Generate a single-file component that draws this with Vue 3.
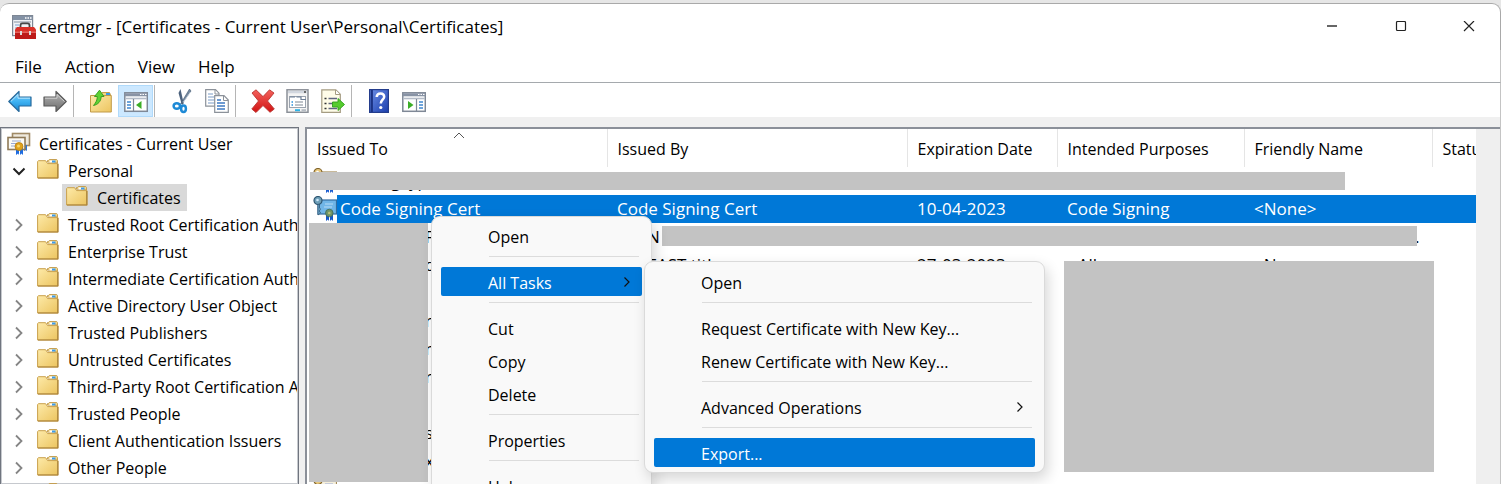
<script setup>
const stores = [
  'Trusted Root Certification Authorities',
  'Enterprise Trust',
  'Intermediate Certification Authorities',
  'Active Directory User Object',
  'Trusted Publishers',
  'Untrusted Certificates',
  'Third-Party Root Certification Authorities',
  'Trusted People',
  'Client Authentication Issuers',
  'Other People',
  'Smart Card Trusted Roots',
]
const tree = [
  { label: 'Certificates - Current User', icon: 'cert', level: 0 },
  { label: 'Personal', icon: 'folder', level: 1, arrow: 'open' },
  { label: 'Certificates', icon: 'folder', level: 2, selected: true },
  ...stores.map((label) => ({ label, icon: 'folder', level: 1, arrow: 'closed' })),
]
const columns = ['Issued To', 'Issued By', 'Expiration Date', 'Intended Purposes', 'Friendly Name', 'Status']
const rows = [
  { icon: true, tail: 'mid', cells: ['g  yp', '', '', '', ''] },
  { icon: true, selected: true, cells: ['Code Signing Cert', 'Code Signing Cert', '10-04-2023', 'Code Signing', '<None>'] },
  { tail: 'end', cells: ['F', 'MS-N', '', '', ''], dot: true },
  { tail: 'end', cells: ['d', 'FABEAST title', '27-03-2023', '<All>', '<None>'] },
  { cells: [] },
  { tail: 'end', cells: ['r', '', '', '', ''] },
  { tail: 'end', cells: ['n', '', '', '', ''] },
  { tail: 'end', cells: ['r', '', '', '', ''] },
  { cells: [] },
  { tail: 'end', cells: ['s', '', '', '', ''] },
  { tail: 'end', cells: ['x', '', '', '', ''] },
  { icon: true, cells: [] },
]
const mainMenu = [
  { label: 'Open' },
  { sep: true },
  { label: 'All Tasks', active: true, sub: true },
  { sep: true },
  { label: 'Cut' },
  { label: 'Copy' },
  { label: 'Delete' },
  { sep: true },
  { label: 'Properties' },
  { sep: true },
  { label: 'Help' },
]
const subMenu = [
  { label: 'Open' },
  { sep: true },
  { label: 'Request Certificate with New Key...' },
  { label: 'Renew Certificate with New Key...' },
  { sep: true },
  { label: 'Advanced Operations', sub: true },
  { sep: true },
  { label: 'Export...', active: true },
]
</script>

<template>
  <div class="window">
    <svg class="defs" width="0" height="0" aria-hidden="true">
      <defs>
        <linearGradient id="gBlue" x1="0" y1="0" x2="0" y2="1"><stop offset="0" stop-color="#7fd0fb" /><stop offset=".5" stop-color="#3fb2f2" /><stop offset="1" stop-color="#1583cf" /></linearGradient>
        <linearGradient id="gGrey" x1="0" y1="0" x2="0" y2="1"><stop offset="0" stop-color="#b5b5b5" /><stop offset="1" stop-color="#6c6c6c" /></linearGradient>
        <linearGradient id="gFold" x1="0" y1="0" x2="1" y2="1"><stop offset="0" stop-color="#fdeaa9" /><stop offset="1" stop-color="#ecc45f" /></linearGradient>
        <linearGradient id="gRed" x1="0" y1="0" x2="0" y2="1"><stop offset="0" stop-color="#f4625c" /><stop offset="1" stop-color="#d01212" /></linearGradient>
        <linearGradient id="gHelp" x1="0" y1="0" x2="1" y2="1"><stop offset="0" stop-color="#6d90e6" /><stop offset="1" stop-color="#1c3fae" /></linearGradient>
      </defs>
      <symbol id="folder" viewBox="0 0 22 20">
        <path d="M10.500 3V1.500h1l.8-1h7.400l.8 1V4z" fill="#f3d689" stroke="#c19a4a" stroke-width=".9" />
        <rect x="12.500" y="1.500" width="5" height="2" fill="#fff" /><rect x="15" y="1.500" width="3.500" height="2" fill="#3d9be9" />
        <path d="M.6 2.600l.8-.9h7.200l2 2.900H21V19H.6z" fill="url(#gFold)" stroke="#c9a04c" />
        <path d="M20.800 5v14H1" fill="none" stroke="#a98238" stroke-width="1.200" />
      </symbol>
      <symbol id="cert" viewBox="0 0 24 24">
        <rect x="5.500" y="1.500" width="17" height="12" fill="#eee9dd" stroke="#a08a66" stroke-width="1.600" />
        <path d="M20 13v6l-1.500-1-1.500 1v-6z" fill="#2c77d8" />
        <rect x="1" y="5.500" width="17" height="12" fill="#fbfaf5" stroke="#8f7a58" stroke-width="1.600" />
        <path d="M5 9h9M4 11.500h7M4 14h4" stroke="#98a9d6" stroke-width="1.100" />
        <path d="M9 15v8l2-1.500L12 23v-6zM13 16v7l1.500-1.500L16 23v-8z" fill="#1f6ce0" />
        <circle cx="12" cy="14.500" r="4" fill="#e0a21b" stroke="#b67d10" stroke-width=".8" /><circle cx="11.500" cy="14" r="1.500" fill="#f8d66a" />
      </symbol>
      <symbol id="keycert" viewBox="0 0 24 26">
        <rect x="5" y="4" width="18.500" height="14" fill="#f5efdc" stroke="#a58b59" stroke-width="1.200" />
        <path d="M12 8h8M11 11h8" stroke="#98a9d6" />
        <circle cx="5" cy="4.500" r="4" fill="#e7c77c" stroke="#80642c" stroke-width="1.200" /><circle cx="4.500" cy="4" r="1.300" fill="#fff" />
        <path d="M5 8.500V19l2.500-2-1.200-2 1.200-2-1-1V8z" fill="#e7c77c" stroke="#80642c" stroke-width=".8" />
        <path d="M13 18v7l1.800-1.500L16 25v-6zM17 18v7l1.500-1.500L20 25v-7z" fill="#1f5fd0" />
        <circle cx="16.300" cy="17" r="3.800" fill="#e0b040" stroke="#94731e" stroke-width=".8" />
      </symbol>
      <symbol id="keycert-on" viewBox="0 0 24 26">
        <rect x="5" y="4" width="18.500" height="14" fill="#70b5e7" stroke="#326da0" stroke-width="1.200" />
        <path d="M12 8h8M11 11h8" stroke="#b7dbf6" />
        <circle cx="5" cy="4.500" r="4" fill="#6e9fb8" stroke="#2e5672" stroke-width="1.200" /><circle cx="4.500" cy="4" r="1.300" fill="#cfe8fa" />
        <path d="M5 8.500V19l2.500-2-1.200-2 1.200-2-1-1V8z" fill="#72b0d8" stroke="#2e5672" stroke-width=".8" />
        <path d="M13 18v7l1.800-1.500L16 25v-6zM17 18v7l1.500-1.500L20 25v-7z" fill="#1458c8" />
        <circle cx="16.300" cy="17" r="3.800" fill="#6f9468" stroke="#3e6a58" stroke-width=".8" /><circle cx="16.300" cy="17" r="1.300" fill="#b4bf78" />
      </symbol>
    </svg>

    <header class="titlebar">
      <svg class="app-icon" width="24" height="26" viewBox="0 0 24 26" aria-hidden="true">
        <rect x=".6" y="1.600" width="20" height="20" fill="#f0f2f5" stroke="#7e8794" stroke-width="1.200" />
        <rect x="1" y="2" width="19.500" height="4" fill="#8492a5" /><path d="M13 4h1.500M15.500 4H17M18 4h1.500" stroke="#fff" stroke-width="1.500" />
        <path d="M2 8h17" stroke="#aab2bd" stroke-width="1.500" /><path d="M3 11h4M3 14h4" stroke="#7aa0d0" />
        <path d="M8.500 14.500v-3.200q0-2 2-2h5q2 0 2 2v3.200" fill="none" stroke="#474747" stroke-width="1.800" />
        <path d="M3 15.500l2-2.500h17l2 2.500V25H3z" fill="#d93028" /><path d="M3 18.500h21V25H3z" fill="#bd1b19" /><path d="M3 18.200h21" stroke="#f0837b" />
        <rect x="8" y="17" width="2" height="4" fill="#ddd" /><rect x="17" y="17" width="2" height="4" fill="#ddd" />
      </svg>
      <h1>certmgr - [Certificates - Current User\Personal\Certificates]</h1>
      <div class="caption">
        <button type="button" aria-label="Minimize"><svg width="12" height="12" viewBox="0 0 12 12"><path d="M1 5h10" stroke="#666" stroke-width="2" /></svg></button>
        <button type="button" aria-label="Maximize"><svg width="12" height="12" viewBox="0 0 12 12"><rect x="1.500" y=".5" width="9" height="9" rx="1" fill="none" stroke="#222" stroke-width="1.200" /></svg></button>
        <button type="button" aria-label="Close"><svg width="12" height="12" viewBox="0 0 12 12"><path d="M1 0l10 10M11 0L1 10" stroke="#222" stroke-width="1.200" /></svg></button>
      </div>
    </header>

    <nav class="menubar">
      <button type="button">File</button>
      <button type="button">Action</button>
      <button type="button">View</button>
      <button type="button">Help</button>
    </nav>

    <div class="toolbar">
      <button type="button" aria-label="Back"><svg width="24" height="24" viewBox="0 0 24 24"><path d="M.8 12.500L11 2.500V8h12v9H11v5.500z" fill="url(#gBlue)" stroke="#286a9c" stroke-width="1.200" stroke-linejoin="round" /><path d="M3 12.300L10 5.500V9.200h12" fill="none" stroke="#b7e4fc" /></svg></button>
      <button type="button" aria-label="Forward"><svg width="24" height="24" viewBox="0 0 24 24"><path d="M23.200 12.500L13 2.500V8H1v9h12v5.500z" fill="url(#gGrey)" stroke="#5a5a5a" stroke-width="1.200" stroke-linejoin="round" /><path d="M2 9.200h12V5.500l7.500 7" fill="none" stroke="#d0d0d0" /></svg></button>
      <span class="divider"></span>
      <button type="button" aria-label="Up"><svg width="24" height="24" viewBox="0 0 24 24"><path d="M12 6l1-2.500h7.500l1 2.500v4H12z" fill="#f1d487" stroke="#c39d48" /><rect x="17" y="4" width="4" height="2" fill="#3d9be9" /><path d="M1.500 6.500h20.800V23H1.500z" fill="url(#gFold)" stroke="#c19a48" /><path d="M4.500 16.500C9 15.500 12 12.500 12.200 7.500H15L10.500 1.200 5.500 7.500h2.800C8.300 11 7 13.500 4.500 16.500z" fill="#5fd234" stroke="#2f9a1c" stroke-width=".9" /></svg></button>
      <button type="button" class="on" aria-label="Show or hide console tree"><svg width="24" height="24" viewBox="0 0 24 24"><rect x=".8" y="3.800" width="22.500" height="18.500" fill="#fff" stroke="#7f8896" stroke-width="1.500" /><path d="M1 5.800h22" stroke="#8893a5" stroke-width="3" /><path d="M16 5.500h1.500M18.500 5.500H20M21 5.500h1.500" stroke="#fff" stroke-width="1.200" /><path d="M1 9.500h22" stroke="#b4bcc8" stroke-width="1.600" /><path d="M9.500 10v12" stroke="#7f8896" stroke-width="1.200" /><path d="M3 13h4M3 16h4M3 19h4" stroke="#3f86cf" stroke-width="1.500" /><path d="M17.500 12v8l-5.500-4z" fill="#3cae27" /></svg></button>
      <span class="divider"></span>
      <button type="button" aria-label="Cut"><svg width="24" height="26" viewBox="0 0 24 26"><path d="M10.500 1l3.200 14.500-1.800 1.500L8.500 5z" fill="#4c627e" /><path d="M19.500 1L21 3l-8 11.500-2.500 1.500z" fill="#73889f" stroke="#40566e" stroke-width=".6" /><path d="M20.500 4l-7 10" stroke="#dbe5ef" stroke-width=".8" /><ellipse cx="6.800" cy="18" rx="3.200" ry="2.800" fill="none" stroke="#1e8ad6" stroke-width="2.500" /><ellipse cx="13.500" cy="20.800" rx="2.400" ry="3.200" fill="none" stroke="#1e8ad6" stroke-width="2.500" /></svg></button>
      <button type="button" aria-label="Copy"><svg width="24" height="24" viewBox="0 0 24 24"><path d="M.7 .7h9.800l3.500 3.500v13H.7z" fill="#fff" stroke="#8c929a" stroke-width="1.200" /><path d="M10 1v4h4" fill="none" stroke="#8c929a" /><path d="M3 5h5M3 8h8M3 11h8M3 14h8" stroke="#7b9cc8" stroke-width="1.200" /><path d="M9.700 6.700H19l4.300 4.300v12.300H9.700z" fill="#fff" stroke="#8c929a" stroke-width="1.200" /><path d="M18.500 7v4.500H23" fill="none" stroke="#8c929a" /><path d="M12 11h4M12 14h8M12 17h8M12 20h8" stroke="#3d79c4" stroke-width="1.300" /></svg></button>
      <span class="divider"></span>
      <button type="button" aria-label="Delete"><svg width="24" height="24" viewBox="0 0 24 24"><path d="M1 4l4-3.200 7 6.800 6.500-6.800L23 4l-6.500 8 6.800 8-4.300 3.300L12 16.500l-7 7L.8 20 7.500 12z" fill="url(#gRed)" stroke="#b93531" stroke-width=".9" stroke-linejoin="round" /></svg></button>
      <button type="button" aria-label="Properties"><svg width="24" height="24" viewBox="0 0 24 24"><rect x="1" y=".8" width="21" height="22.500" fill="#f4f4f4" stroke="#8b9098" stroke-width="1.500" /><path d="M2 3h19" stroke="#d2d7df" stroke-width="2.500" /><path d="M18 3h2" stroke="#444" stroke-width="1.500" /><rect x="3.500" y="7.500" width="16" height="11" fill="#fff" stroke="#9ba3ae" /><path d="M4 8h5M10.500 8H15v2.500H20" stroke="#6d7e96" fill="none" stroke-width="1.200" /><path d="M9 13h8M9 16h8" stroke="#7f8793" stroke-width="1.200" /><path d="M5.500 13H7M5.500 16H7" stroke="#2890dc" stroke-width="1.500" /><path d="M9 21.200h5" stroke="#2bb2e6" stroke-width="2" /><path d="M15.500 21.200H20" stroke="#b6bcc4" stroke-width="2" /></svg></button>
      <button type="button" aria-label="Export list"><svg width="24" height="24" viewBox="0 0 24 24"><path d="M.8 .8h14l4.500 4.500v18H.8z" fill="#fffce8" stroke="#a59c82" stroke-width="1.200" /><path d="M14.500 1v4.500H19" fill="#fff" stroke="#a59c82" /><path d="M7.500 9.500H16M7.500 14.500H13M7.500 19.500H16" stroke="#5f6580" stroke-width="1.400" /><path d="M3.500 9.500H5.500M3.500 14.500h2M3.500 19.500h2" stroke="#333" stroke-width="1.600" /><path d="M11.500 13H17V9.500l6.500 6-6.500 6V18h-5.500z" fill="#56cc2d" stroke="#2f9e1d" stroke-width=".9" /></svg></button>
      <span class="divider"></span>
      <button type="button" aria-label="Help topics"><svg width="20" height="24" viewBox="0 0 20 24"><rect x=".6" y=".6" width="18.800" height="22.800" fill="url(#gHelp)" stroke="#243d8c" stroke-width="1.200" /><path d="M2.800 1v22" stroke="#1b3384" stroke-width="2.200" /><path d="M7.700 8q.2-3.500 3.800-3.500t3.700 3.300c0 2.800-3.400 3.200-3.400 6.700" fill="none" stroke="#fff" stroke-width="2.500" /><circle cx="11.800" cy="18.500" r="1.600" fill="#fff" /></svg></button>
      <button type="button" aria-label="Show or hide action pane"><svg width="24" height="24" viewBox="0 0 24 24"><rect x=".8" y="3.800" width="22.500" height="18.500" fill="#fff" stroke="#7f8896" stroke-width="1.500" /><path d="M1 5.800h22" stroke="#8893a5" stroke-width="3" /><path d="M16 5.500h1.500M18.500 5.500H20M21 5.500h1.500" stroke="#fff" stroke-width="1.200" /><path d="M1 9.500h22" stroke="#b4bcc8" stroke-width="1.600" /><path d="M14.500 10v12" stroke="#7f8896" stroke-width="1.200" /><path d="M17 13h4M17 16h4M17 19h4" stroke="#3f86cf" stroke-width="1.500" /><path d="M6 12v8l5.500-4z" fill="#3cae27" /></svg></button>
    </div>

    <main class="panes">
      <ul class="tree">
        <li v-for="n in tree" :key="n.label + n.level" :class="['lvl' + n.level]">
          <span v-if="n.arrow" class="arrow">
            <svg v-if="n.arrow === 'open'" width="14" height="14" viewBox="0 0 14 14"><path d="M1.500 4.500L7 10l5.500-5.500" fill="none" stroke="#222" stroke-width="2" /></svg>
            <svg v-else width="14" height="14" viewBox="0 0 14 14"><path d="M4 1.500L9.500 7 4 12.500" fill="none" stroke="#858585" stroke-width="1.800" /></svg>
          </span>
          <span :class="['node', { selected: n.selected }]">
            <svg v-if="n.icon === 'cert'" width="24" height="24"><use href="#cert" /></svg>
            <svg v-else class="fold" width="22" height="20"><use href="#folder" /></svg>
            <span>{{ n.label }}</span>
          </span>
        </li>
      </ul>

      <section class="list">
        <div class="list-body">
          <table>
            <colgroup><col class="c300" /><col class="c300" /><col class="c150" /><col class="c187" /><col class="c188" /><col /></colgroup>
            <thead>
              <tr><th v-for="c in columns" :key="c" scope="col">{{ c }}</th></tr>
            </thead>
            <tbody>
              <tr v-for="(r, i) in rows" :key="i" :class="{ picked: r.selected }">
                <td class="first">
                  <span class="name">
                    <svg v-if="r.icon" width="24" height="26"><use :href="r.selected ? '#keycert-on' : '#keycert'" /></svg>
                    <span :class="['label', r.tail]">{{ r.cells[0] }}</span>
                  </span>
                </td>
                <td>{{ r.cells[1] }}</td>
                <td>{{ r.cells[2] }}</td>
                <td :class="{ inset: i === 3 }">{{ r.cells[3] }}</td>
                <td :class="{ dot: r.dot }">{{ r.dot ? '.' : r.cells[4] }}</td>
                <td></td>
              </tr>
            </tbody>
          </table>
          <svg class="sort" width="12" height="7" viewBox="0 0 12 7" aria-hidden="true"><path d="M1 6l5-5 5 5" fill="none" stroke="#555" /></svg>
          <span class="mask m1"></span>
          <span class="mask m2"></span>
          <span class="mask m3"></span>
          <span class="mask m4"></span>
        </div>
        <div class="gutter"></div>
      </section>
    </main>

    <div class="menu main-menu" role="menu">
      <template v-for="(m, i) in mainMenu" :key="i">
        <hr v-if="m.sep" />
        <button v-else type="button" role="menuitem" :class="{ active: m.active }">
          <span>{{ m.label }}</span>
          <svg v-if="m.sub" width="8" height="12" viewBox="0 0 8 12"><path d="M1.500 1.500L6 6l-4.500 4.500" fill="none" stroke="#111" stroke-width="1.200" /></svg>
        </button>
      </template>
    </div>
    <div class="menu sub-menu" role="menu">
      <template v-for="(m, i) in subMenu" :key="i">
        <hr v-if="m.sep" />
        <button v-else type="button" role="menuitem" :class="{ active: m.active }">
          <span>{{ m.label }}</span>
          <svg v-if="m.sub" width="8" height="12" viewBox="0 0 8 12"><path d="M1.500 1.500L6 6l-4.500 4.500" fill="none" stroke="#111" stroke-width="1.200" /></svg>
        </button>
      </template>
    </div>
  </div>
</template>

<style>
body { background: #e6e6e6; overflow: hidden; }
</style>

<style scoped>
* { box-sizing: border-box; }
.window {
  position: relative;
  display: flex;
  flex-direction: column;
  height: 100vh;
  padding-top: 3px;
  overflow: hidden;
  font: 17px/24px "Open Sans", "Noto Sans", sans-serif;
  color: #000;
}
.defs { position: absolute; }
button { font: inherit; color: inherit; background: none; border: 0; padding: 0; margin: 0; }
svg { display: block; flex: none; }

.titlebar {
  display: flex;
  align-items: center;
  height: 47px;
  padding-left: 12px;
  background: #fff;
  border: 1px solid #a9a9a9;
  border-width: 1px 1px 0 0;
  border-radius: 9px 9px 0 0;
}
h1 { margin: 0; padding-left: 3px; font-size: inherit; font-weight: 400; flex: 1; white-space: nowrap; }
.caption { display: flex; }
.caption button { width: 69px; height: 40px; display: flex; align-items: center; justify-content: center; }
.caption button:last-child { width: 68px; margin-right: -3px; }

.menubar {
  display: flex;
  align-items: center;
  gap: 23px;
  height: 33px;
  padding: 2px 0 0 15px;
  background: #fff;
  border-right: 1px solid #c4c4c4;
  border-bottom: 1px solid #a5a9ad;
}
.toolbar {
  display: flex;
  height: 34px;
  padding: 2px 0 0 2px;
  background: #fff;
  border-right: 1px solid #c4c4c4;
}
.toolbar button { display: flex; align-items: center; justify-content: center; width: 35px; height: 32px; }
.toolbar .on { background: #cce8ff; border: 1px solid #b0dafb; }
.divider { width: 11px; height: 32px; border-left: 1px solid #b5b5b5; margin-left: 1px; margin-right: -1px; }

.panes {
  flex: 1;
  min-height: 0;
  display: flex;
  gap: 6px;
  padding-top: 10px;
  background: #f0f0f0;
  border-right: 1px solid #c4c4c4;
}
.tree {
  flex: none;
  width: 299px;
  margin: 0;
  padding: 2px 1px 0 0;
  list-style: none;
  background: #fff;
  border: 1px solid #70757f;
  border-bottom: 0;
  box-shadow: inset 0 0 0 1px #c6c9ce;
  font-size: 16px;
  overflow: hidden;
}
.tree li { display: flex; align-items: center; height: 27px; white-space: nowrap; overflow: hidden; }
.lvl0 { padding-left: 6px; }
.lvl1 { padding-left: 11px; }
.lvl2 { padding-left: 61px; }
.arrow { width: 25px; flex: none; }
.node { display: flex; align-items: center; gap: 8px; height: 27px; padding-right: 6px; }
.lvl1 .node, .lvl2 .node { gap: 9px; }
.lvl2 .node { padding-left: 4px; }
.fold { margin-bottom: 4px; }
.node.selected { background: #d9d9d9; }

.list {
  flex: 1;
  min-width: 0;
  display: flex;
  background: #fff;
  border: 2px solid #8b9099;
  border-width: 2px 0 0 2px;
}
.list-body { position: relative; flex: 1; min-width: 0; overflow: hidden; }
.gutter { width: 24px; background: #efefef; }
table { width: 100%; table-layout: fixed; border-collapse: collapse; }
.c300 { width: 300px; }
.c150 { width: 150px; }
.c187 { width: 187px; }
.c188 { width: 188px; }
th { height: 38px; padding: 2px 0 0 10px; font-size: 16px; font-weight: 400; text-align: left; white-space: nowrap; overflow: hidden; border-right: 1px solid #e5e5e5; }
th:last-child { border-right: 0; }
td { height: 28px; padding: 0 0 0 10px; white-space: pre; overflow: hidden; }
tbody tr { height: 28px; }
.first { padding-left: 6px; }
.name { display: flex; align-items: center; height: 28px; }
.label { padding: 0 3px; }
.label.mid { padding-left: 54px; }
.label.end { padding-left: 112px; }
.picked td { background: #0078d7; color: #fff; }
.picked .first { background: linear-gradient(to right, #fff 30px, #0078d7 30px); }
.inset { padding-left: 11px; }
.dot { padding-left: 171px; }
.sort { position: absolute; left: 146px; top: 3px; }
.mask { position: absolute; background: #c3c3c3; }
.m1 { left: 3px; top: 43px; width: 1035px; height: 18px; }
.m2 { left: 355px; top: 97px; width: 755px; height: 20px; }
.m3 { left: 2px; top: 94px; width: 119px; height: 259px; }
.m4 { left: 757px; top: 132px; width: 370px; height: 211px; }

.menu {
  position: absolute;
  padding: 4px 9px;
  background: #f9f9f9;
  border: 1px solid #dadada;
  border-radius: 9px;
  box-shadow: 3px 6px 14px rgba(0, 0, 0, .16);
  font-size: 16px;
}
.main-menu { left: 431px; top: 216px; width: 221px; }
.sub-menu { left: 644px; top: 261px; width: 401px; padding: 5px 9px 1px; }
.menu button {
  display: flex;
  align-items: center;
  justify-content: space-between;
  width: 100%;
  height: 29px;
  margin-bottom: 4px;
  padding: 3px 11px 0 47px;
  border-radius: 2px;
  white-space: nowrap;
}
.menu button svg { margin-bottom: 3px; }
.menu .active { background: #0078d7; color: #fff; }
.menu hr { height: 1px; margin: 6px 3px 10px 48px; border: 0; background: #dcdcdc; }
</style>
